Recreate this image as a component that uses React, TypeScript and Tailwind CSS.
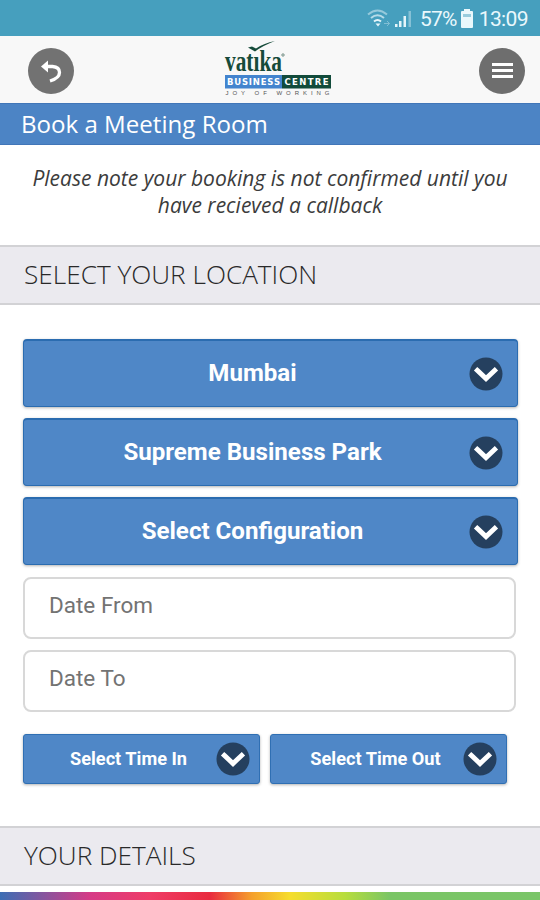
import React from "react";

const sans = "font-['Open_Sans','Noto_Sans',sans-serif]";

function ChevronBadge() {
  return (
    <svg className="size-[34px] shrink-0" viewBox="0 0 34 34" fill="none">
      <circle cx="17" cy="17" r="16.5" fill="#25405f" />
      <path d="M8.3 13.300 17 21.600 25.700 13.300" stroke="#fff" strokeWidth="4.800" strokeLinecap="square" />
    </svg>
  );
}

function SelectButton({ label }: { label: string }) {
  return (
    <button className="grid h-[68px] w-[495px] grid-cols-[1fr_34px] items-center rounded-[4px] border border-t-2 border-[#2b6cb0] bg-[#4f87c7] pr-[14px] text-white shadow-[0_1px_3px_rgba(0,0,0,0.3)]">
      <span className="pl-[12px] text-center text-[24.1px] leading-none font-bold">{label}</span>
      <ChevronBadge />
    </button>
  );
}

function TimeButton({ label }: { label: string }) {
  return (
    <button className="flex h-[50px] w-[237px] items-center rounded-[3px] border border-[#2f6fb3] bg-[#4f87c7] pr-[9px] text-white shadow-[0_1px_3px_rgba(0,0,0,0.3)]">
      <span className="flex-1 pl-[17px] text-center text-[18.2px] leading-none font-bold whitespace-nowrap">{label}</span>
      <ChevronBadge />
    </button>
  );
}

function DateField({ label }: { label: string }) {
  return (
    <div className="flex h-[62px] w-[493px] items-center rounded-[8px] border-2 border-[#d8d8d8] bg-white pb-[5px] pl-[24px] text-[22.5px] leading-none text-[#737373]">
      {label}
    </div>
  );
}

function SectionHeading({ label }: { label: string }) {
  return (
    <h2 className={`${sans} flex h-[60px] items-center border-y-2 border-[#d2d2d5] bg-[#ebeaef] pb-px pl-[24px] text-[26.2px] leading-none font-light text-[#292929]`}>
      {label}
    </h2>
  );
}

function Logo() {
  return (
    <svg className="h-[60px] w-[110px]" viewBox="222 41 110 60">
      <text x="225" y="70.500" textLength="57" lengthAdjust="spacingAndGlyphs" fontFamily="'Liberation Serif',serif" fontWeight="700" fontSize="30" fill="#164b3a">vatıka</text>
      <path d="M248 47.500 252 46.500 256 48.500 Q264 43 275 41 Q263 45.500 255 51.500 Z" fill="#164b3a" />
      <circle cx="283" cy="55" r="1.2" fill="none" stroke="#52756a" strokeWidth=".8" />
      <rect x="225" y="75" width="57" height="13.500" fill="#4384ce" />
      <rect x="282" y="75" width="49" height="13.500" fill="#124b3b" />
      <g fontFamily="'DejaVu Sans',sans-serif" fontWeight="700" fontSize="8.5" fill="#fff">
        <text x="227" y="85" textLength="53">BUSINESS</text>
        <text x="284.5" y="85" textLength="44">CENTRE</text>
      </g>
      <text x="225.5" y="94.500" textLength="104" fontFamily="'Liberation Sans',sans-serif" fontSize="6" fill="#555">JOY OF WORKING</text>
    </svg>
  );
}

function StatusIcons() {
  return (
    <svg className="h-[36px] w-[48px]" viewBox="367 0 48 36" fill="none">
      <g stroke="#e6f5fa" strokeWidth="2">
        <path d="M369 14.5 Q378.500 6.500 388 14.500" opacity=".5" />
        <path d="M372 18 Q378.500 12.500 385 18" opacity=".7" />
        <path d="M375 21.500 Q378.500 18.500 382 21.500" />
      </g>
      <path d="M376.500 23.500 379 26.500 381.500 23.500Z" fill="#e6f5fa" />
      <path d="M385 23.500h5m-2-2.500 2.500 2.500-2.500 2.500" stroke="#d6edf4" opacity=".4" />
      <g fill="#e6f5fa">
        <rect x="396" y="24" width="2.500" height="3" />
        <rect x="400" y="21" width="2.500" height="6" />
        <rect x="404.500" y="16" width="2.500" height="11" />
        <rect x="409.500" y="11" width="2.500" height="16" opacity=".4" />
      </g>
    </svg>
  );
}

export default function App() {
  return (
    <main className="flex h-[900px] w-[540px] flex-col overflow-hidden bg-white font-['Roboto',sans-serif]">
      <div className="flex h-[36px] shrink-0 items-center justify-end bg-[#469fbe] pr-[12px] text-[#eaf8fc]">
        <StatusIcons />
        <span className="ml-[6px] pt-[3px] text-[21px] leading-none tracking-[-0.8px]">57%</span>
        <svg className="mr-[5px] ml-[3px] h-[20px] w-[14px] translate-y-px" viewBox="0 0 14 20">
          <path d="M4 0h6v2h2q1 0 1 1v15q0 1-1 1H2q-1 0-1-1V3q0-1 1-1h2z" fill="#eaf8fc" />
          <path d="M3 5h8v3H3z" fill="#469fbe" opacity=".5" />
        </svg>
        <time className="pt-[3px] text-[21px] leading-none tracking-[-0.6px]">13:09</time>
      </div>
      <header className="flex h-[67px] shrink-0 items-center justify-between bg-[#f8f8f8] pt-[2px] pr-[15px] pl-[28px]">
        <button className="flex size-[46px] items-center justify-center rounded-full bg-[#727272]" aria-label="Back">
          <svg className="size-[46px]" viewBox="0 0 46 46" fill="none">
            <path d="M17 18.500H24.500Q31.500 19 31.500 24.500 31.500 30 22 33" stroke="#fff" strokeWidth="3.300" />
            <path d="M13 18.500 20 12.500V24.500Z" fill="#fff" />
          </svg>
        </button>
        <Logo />
        <button className="flex size-[46px] flex-col items-center justify-center gap-[3px] rounded-full bg-[#6e6e6e]" aria-label="Menu">
          <span className="h-[3px] w-[21px] bg-white" />
          <span className="h-[3px] w-[21px] bg-white" />
          <span className="h-[3px] w-[21px] bg-white" />
        </button>
      </header>
      <h1 className={`${sans} flex h-[42px] shrink-0 items-center border-y border-[#4176b8] bg-[#4c84c5] pl-[21px] text-[24.1px] leading-none text-white`}>
        Book a Meeting Room
      </h1>
      <p className={`${sans} h-[100px] shrink-0 pt-[20px] text-center text-[21px] leading-[27px] text-[#3c3c3c] italic`}>
        Please note your booking is not confirmed until you
        <br />
        have recieved a callback
      </p>
      <SectionHeading label="SELECT YOUR LOCATION" />
      <section className="flex h-[521px] shrink-0 flex-col pt-[34px] pl-[23px]">
        <div className="flex flex-col gap-[11px]">
          <SelectButton label="Mumbai" />
          <SelectButton label="Supreme Business Park" />
          <SelectButton label="Select Configuration" />
        </div>
        <div className="mt-[12px] flex flex-col gap-[11px]">
          <DateField label="Date From" />
          <DateField label="Date To" />
        </div>
        <div className="mt-[22px] flex gap-[10px]">
          <TimeButton label="Select Time In" />
          <TimeButton label="Select Time Out" />
        </div>
      </section>
      <SectionHeading label="YOUR DETAILS" />
      <div className="mt-auto h-[8px] shrink-0 bg-[linear-gradient(90deg,#3c6eb4_0px,#d63a86_90px,#ef3c67_150px,#e92b3e_210px,#f5a02c_252px,#f6dd2d_290px,#b7dd3d_345px,#7ac565_390px,#7ac568_540px)]" />
    </main>
  );
}
